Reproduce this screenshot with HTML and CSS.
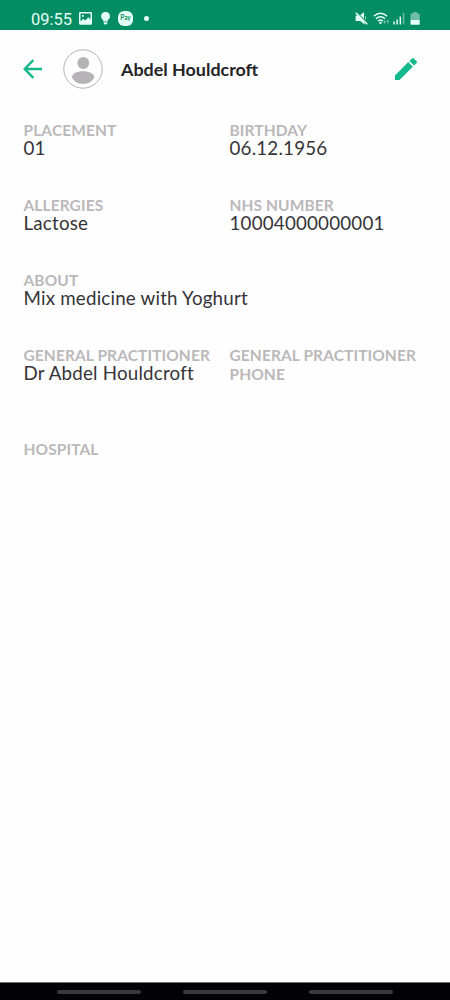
FILE: index.html
```
<!DOCTYPE html>
<html lang="en">
  <head>
    <meta charset="UTF-8" />
    <meta name="viewport" content="width=device-width, initial-scale=1.0" />
    <title>Abdel Houldcroft</title>
    <link rel="stylesheet" href="styles.css">
  </head>
  <body>
    <div class="status-bar">
      <div class="status-left">
        <span class="time">09:55</span>
        <svg class="icon-image" width="13" height="13" viewBox="0 0 13 13">
          <path fill-rule="evenodd" d="M1.200 0h10.600A1.200 1.200 0 0 1 13 1.200v10.300a1.200 1.200 0 0 1-1.200 1.200H1.200A1.200 1.200 0 0 1 0 11.500V1.200A1.200 1.200 0 0 1 1.200 0zM1.500 1.500v8l2.700-2.700 2.100 1.700 3-3.300 2.200 2.300v-6zM3 3h1.800v1.800H3z" />
        </svg>
        <svg class="icon-bulb" width="9" height="13" viewBox="0 0 9 13">
          <path d="M4.500 0a4.300 4.300 0 0 1 2.300 8v1.500H2.200V8A4.300 4.300 0 0 1 4.500 0zM2.700 10.200h3.600v1.300l-1 1H3.700l-1-1z" />
        </svg>
        <span class="pay">Pay</span>
        <span class="dot"></span>
      </div>
      <div class="status-right">
        <svg width="13" height="13" viewBox="0 0 13 13">
          <path d="M.6 3.600h3l6 6V12.400L5.200 9H.6zM5.200 3L9 .2v6.600zM10 3.500q1.800 2.200.3 4.500z" />
          <path class="slash" d="M.8.800l11.500 11.500" />
        </svg>
        <svg class="icon-wifi" width="17" height="13" viewBox="0 0 17 13">
          <path class="arc" d="M.8 4.200q6.700-6 13.400 0M2.900 6.700q4.600-4 9.200 0M5 9q2.500-2 5 0" />
          <circle cx="7.500" cy="10.800" r="1.200" />
          <path class="faint" d="M10 9.500h1.200V8h1v1.500h1.200L11.700 12zM13.300 9.800L15 7.500l1.700 2.300h-1.200v2h-1v-2z" />
        </svg>
        <svg class="icon-signal" width="12" height="13" viewBox="0 0 12 13">
          <path d="M.3 9.500h1.500v3H.3zM3.400 7.500h1.500v5H3.400zM6.600 4.500h1.500v8H6.600z" />
          <path class="faint" d="M9.800.8h1.500v11.700H9.800z" />
        </svg>
        <svg class="icon-battery" width="10" height="13" viewBox="0 0 10 13">
          <path class="faint" d="M3 0h4v1.500h2q.7 0 .7.700V8H.5V2.200q0-.7.700-.7H3z" />
          <path d="M.5 8h9.200v4q0 .7-.7.700H1.200q-.7 0-.7-.7z" />
        </svg>
      </div>
    </div>

    <header class="header">
      <svg class="back" width="20" height="20" viewBox="0 0 20 20">
        <path d="M19 10H2M10.300 1.200L1.700 10l8.600 8.800" />
      </svg>
      <svg class="avatar" width="40" height="40" viewBox="0 0 40 40">
        <circle class="ring" cx="20" cy="20" r="19.200" />
        <circle cx="20.300" cy="14" r="5.900" />
        <path d="M9 28.300C9 24.500 14 22.300 20 22.300s11.300 2.200 11.300 6C29.500 32.500 25 35 20 35S10.800 32.500 9 28.300z" />
      </svg>
      <h1>Abdel Houldcroft</h1>
      <svg class="edit" width="22" height="22" viewBox="0 0 22 22">
        <path d="M0 17.400V22h4.600L17.800 8.700l-4.600-4.600zM21.600 5a1.200 1.200 0 0 0 0-1.700L18.700.4a1.200 1.200 0 0 0-1.700 0l-2.600 2.500L19 7.500z" />
      </svg>
    </header>

    <main class="details">
      <div class="field">
        <h2>PLACEMENT</h2>
        <p>01</p>
      </div>
      <div class="field">
        <h2>BIRTHDAY</h2>
        <p>06.12.1956</p>
      </div>
      <div class="field">
        <h2>ALLERGIES</h2>
        <p>Lactose</p>
      </div>
      <div class="field">
        <h2>NHS NUMBER</h2>
        <p>10004000000001</p>
      </div>
      <div class="field wide">
        <h2>ABOUT</h2>
        <p>Mix medicine with Yoghurt</p>
      </div>
      <div class="field">
        <h2>GENERAL PRACTITIONER</h2>
        <p>Dr Abdel Houldcroft</p>
      </div>
      <div class="field">
        <h2>GENERAL PRACTITIONER PHONE</h2>
        <p></p>
      </div>
      <div class="field wide">
        <h2>HOSPITAL</h2>
        <p></p>
      </div>
    </main>

    <div class="nav-bar">
      <span></span>
      <span></span>
      <span></span>
    </div>
  </body>
</html>
```
FILE: styles.css
```
* {
  margin: 0;
  padding: 0;
  box-sizing: border-box;
}
body {
  height: 100vh;
  display: flex;
  flex-direction: column;
  background-color: #fefefe;
  font-family: Lato, sans-serif;
  overflow: hidden;
}
svg {
  display: block;
  flex-shrink: 0;
}

/* status bar */
.status-bar {
  height: 30px;
  padding: 6px 30px 0 31px;
  display: flex;
  justify-content: space-between;
  background-color: #048c62;
  color: #e4fff5;
}
.status-bar svg {
  fill: #e4fff5;
}
.status-left,
.status-right {
  height: 25px;
  display: flex;
  align-items: center;
}
.time {
  width: 41px;
  padding-top: 1px;
  font-family: Roboto, sans-serif;
  font-size: 16.5px;
  white-space: nowrap;
}
.icon-image {
  margin-left: 7px;
}
.icon-bulb {
  margin-left: 9px;
}
.pay {
  width: 15px;
  height: 15px;
  margin-left: 8px;
  border-radius: 6px;
  background-color: #e4fff5;
  color: #048c62;
  font-size: 6.5px;
  font-weight: bold;
  line-height: 14px;
  text-align: center;
}
.dot {
  width: 5px;
  height: 5px;
  margin-left: 11px;
  border-radius: 50%;
  background-color: #e4fff5;
}
.status-bar .faint {
  fill: #6fbda2;
}
.slash {
  stroke: #e4fff5;
  stroke-width: 1.5;
}
.arc {
  fill: none;
  stroke: #e4fff5;
  stroke-width: 1.5;
}
.icon-wifi {
  margin-left: 5px;
}
.icon-signal {
  margin-left: 3px;
}
.icon-battery {
  margin-left: 5px;
}

/* header */
.header {
  height: 78px;
  padding: 0 33px 0 23px;
  display: flex;
  align-items: center;
}
.back {
  fill: none;
  stroke: #14b98b;
  stroke-width: 2.4;
}
.avatar {
  margin-left: 20px;
  fill: #b5b3b5;
}
.ring {
  fill: none;
  stroke: #b5b3b5;
}
.header h1 {
  flex: 1;
  margin-left: 18px;
  font-size: 17.9px;
  line-height: 22px;
  color: #242326;
}
.edit {
  fill: #14b98b;
}

/* details */
.details {
  flex: 1;
  padding: 13px 22px 0 23.5px;
  display: grid;
  grid-template-columns: 188px 198px;
  column-gap: 18px;
  align-content: start;
}
.field {
  min-height: 75px;
  padding-bottom: 37px;
}
.wide {
  grid-column: 1 / 3;
}
.field h2 {
  font-size: 15.5px;
  line-height: 18.75px;
  letter-spacing: 0.1px;
  color: #bab8ba;
}
.field p {
  min-height: 19px;
  padding-top: 0.5px;
  font-size: 18.75px;
  line-height: 16px;
  letter-spacing: 0.2px;
  color: #363438;
}

/* navigation bar */
.nav-bar {
  height: 18px;
  padding: 7px 57px 0;
  display: flex;
  justify-content: space-between;
  background-color: #020103;
  border-top: 1px solid #706f71;
}
.nav-bar span {
  width: 84px;
  height: 4px;
  border-radius: 2px;
  background-color: #39383a;
}
```
